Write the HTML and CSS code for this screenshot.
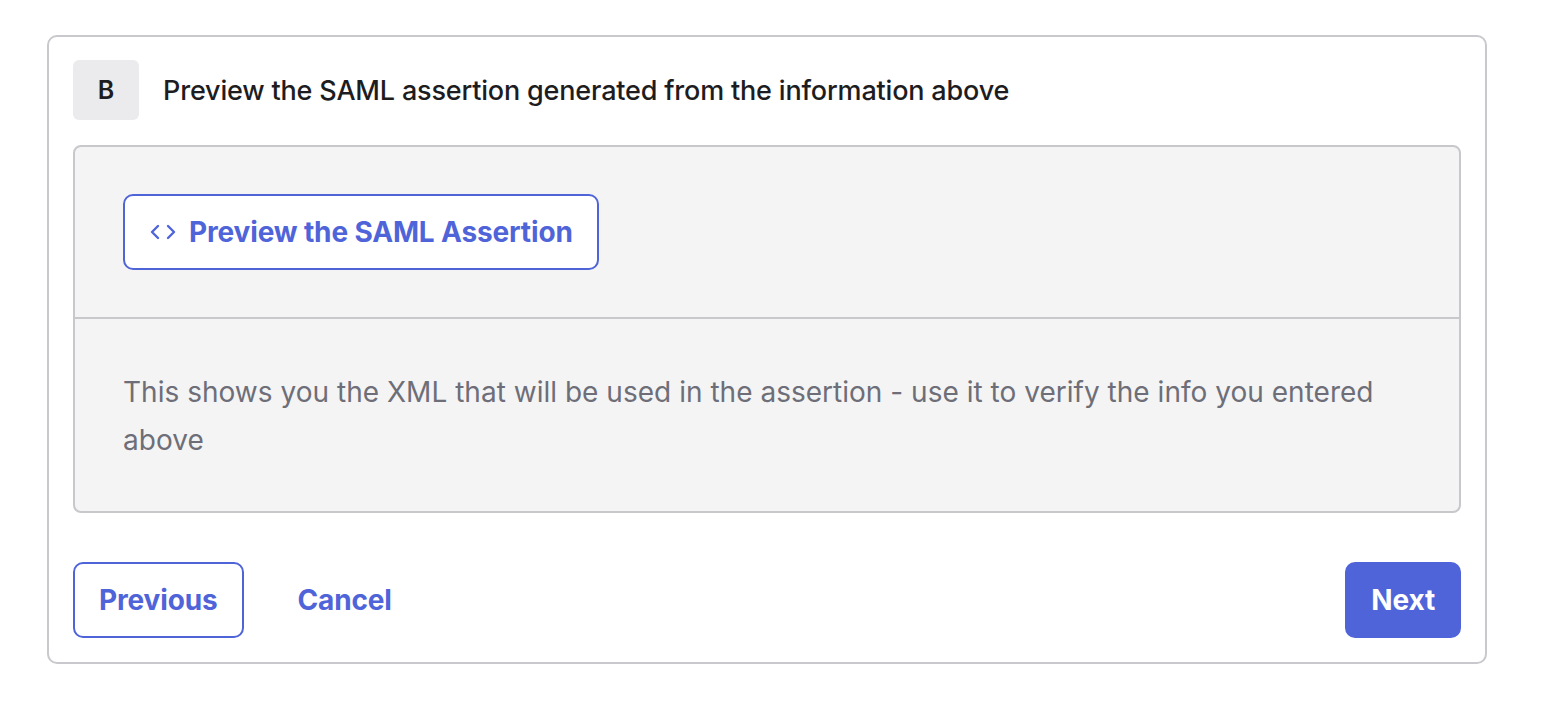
FILE: index.html
```html
<!DOCTYPE html>
<html>
<head>
<meta charset="utf-8">
<link rel="stylesheet" href="styles.css">
</head>
<body>
<div class="page">
  <section class="card">
    <header class="step-head">
      <div class="badge">B</div>
      <h2 class="step-title">Preview the SAML assertion generated from the information above</h2>
    </header>
    <div class="panel">
      <div class="panel-top">
        <button class="btn btn-outline btn-preview">
          <svg class="code-icon" viewBox="0 0 28 16" width="28" height="16" aria-hidden="true">
            <path d="M9 2 L3 8 L9 14" fill="none" stroke="currentColor" stroke-width="2.4" stroke-linecap="round" stroke-linejoin="round"/>
            <path d="M19 2 L25 8 L19 14" fill="none" stroke="currentColor" stroke-width="2.4" stroke-linecap="round" stroke-linejoin="round"/>
          </svg>
          <span>Preview the SAML Assertion</span>
        </button>
      </div>
      <div class="panel-bottom">
        <p class="desc">This shows you the XML that will be used in the assertion - use it to verify the info you entered above</p>
      </div>
    </div>
    <footer class="actions">
      <div class="actions-left">
        <button class="btn btn-outline">Previous</button>
        <button class="btn btn-link">Cancel</button>
      </div>
      <button class="btn btn-primary">Next</button>
    </footer>
  </section>
</div>
</body>
</html>
```

FILE: styles.css
```css
* { box-sizing: border-box; }
html, body { margin: 0; padding: 0; background: #ffffff; }
body { font-family: Inter, "Noto Sans", "Liberation Sans", sans-serif; color: #1d1d21; }

.page { padding: 35px 0 0 47px; }

.card {
  width: 1440px;
  border: 2px solid #c9c9cd;
  border-radius: 10px;
  padding: 23px 24px 24px 24px;
  background: #fff;
}

.step-head { display: flex; align-items: center; gap: 24px; }
.badge {
  width: 66px; height: 60px;
  background: #ebebed;
  border-radius: 6px;
  display: flex; align-items: center; justify-content: center;
  font-size: 25px; font-weight: 600; color: #1d1d21;
}
.step-title { margin: 0; font-size: 27px; font-weight: 500; letter-spacing: -0.18px; color: #1d1d21; }

.panel {
  margin-top: 25px;
  border: 2px solid #c8c8cc;
  border-radius: 8px;
  background: #f4f4f4;
}
.panel-top { padding: 47px 48px 47px 48px; border-bottom: 2px solid #c8c8cc; }
.panel-bottom { padding: 49px 48px 47px 48px; }
.desc { margin: 0; font-size: 28px; line-height: 48px; color: #6e6e78; letter-spacing: 0.02px; }

.btn {
  font-family: inherit;
  font-size: 28px;
  font-weight: 700;
  height: 76px;
  border-radius: 10px;
  padding: 0 24px;
  cursor: pointer;
  letter-spacing: -0.15px;
  display: inline-flex; align-items: center;
}
.btn-outline { background: #fff; border: 2px solid #5064d9; color: #5064d9; }
.btn-preview { padding: 0 24px 0 24px; gap: 12px; }
.code-icon { display: block; }
.btn-link { background: none; border: 2px solid transparent; color: #5064d9; }
.btn-primary { background: #5064d9; border: 2px solid #5064d9; color: #fff; }

.actions {
  margin-top: 49px;
  display: flex; justify-content: space-between; align-items: center;
}
.actions-left { display: flex; gap: 28px; align-items: center; }
```
